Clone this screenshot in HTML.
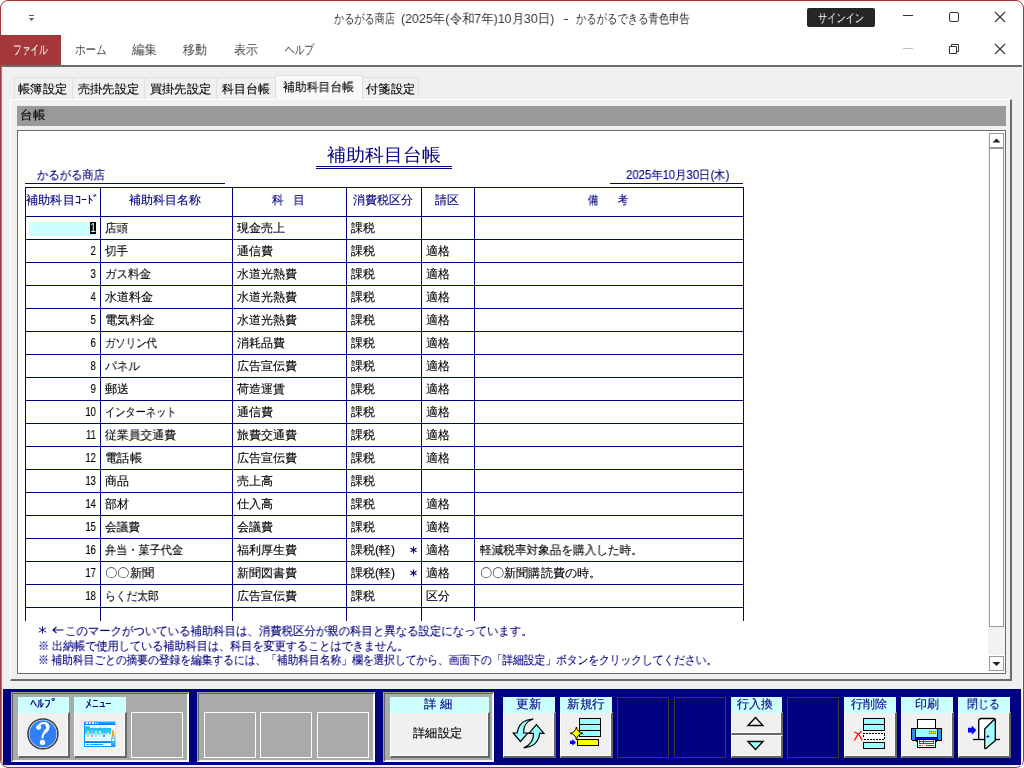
<!DOCTYPE html>
<html lang="ja">
<head>
<meta charset="utf-8">
<style>
*{box-sizing:border-box;margin:0;padding:0}
html,body{width:1024px;height:768px;overflow:hidden;background:#fff}
body{position:relative;font-family:"Liberation Sans",sans-serif;color:#000}
.a{position:absolute;white-space:nowrap;transform-origin:0 0;will-change:transform}
div.a{}
svg.a{overflow:visible}
</style>
</head>
<body>
<div class="a" style="left:0;top:0;width:1024px;height:768px;border:1px solid #a4373a;border-radius:8px;background:#fff"></div>
<svg class="a" style="left:27px;top:13px" width="10" height="10"><path d="M2 2.5h5" stroke="#555" stroke-width="1"/><path d="M2 5h5l-2.5 3z" fill="#555"/></svg>
<div class="a" id="t1" style="left:334px;top:11px;font-size:13px;line-height:15px;color:#333;transform:scaleX(0.7821);">かるがる商店</div>
<div class="a" id="t2" style="left:401px;top:11px;font-size:13px;line-height:15px;color:#333;transform:scaleX(0.9563);">(2025年(令和7年)10月30日)</div>
<div class="a" style="left:564px;top:19px;width:4px;height:1px;background:#444"></div>
<div class="a" id="t3" style="left:576px;top:11px;font-size:13px;line-height:15px;color:#333;transform:scaleX(0.7958);">かるがるできる青色申告</div>
<div class="a" style="left:807px;top:8px;width:68px;height:19px;background:#262626;border-radius:2px"></div>
<div class="a" id="t4" style="left:818px;top:11px;font-size:12px;line-height:14px;color:#fff;transform:scaleX(0.7667);">サインイン</div>
<div class="a" style="left:903px;top:15px;width:10px;height:1px;background:#333"></div>
<div class="a" style="left:949px;top:12px;width:10px;height:10px;border:1px solid #333;border-radius:2px"></div>
<svg class="a" style="left:994px;top:11px" width="12" height="12"><path d="M1 1L11 11M11 1L1 11" stroke="#333" stroke-width="1.1"/></svg>
<div class="a" style="left:1px;top:35px;width:60px;height:30px;background:#a4373a"></div>
<div class="a" id="t5" style="left:13px;top:42px;font-size:13px;line-height:15px;color:#fff;transform:scaleX(0.6667);">ファイル</div>
<div class="a" id="t6" style="left:75px;top:42px;font-size:13px;line-height:15px;color:#444;transform:scaleX(0.8108);">ホーム</div>
<div class="a" id="t7" style="left:132px;top:42px;font-size:13px;line-height:15px;color:#444;transform:scaleX(0.9600);">編集</div>
<div class="a" id="t8" style="left:183px;top:42px;font-size:13px;line-height:15px;color:#444;transform:scaleX(0.9200);">移動</div>
<div class="a" id="t9" style="left:234px;top:42px;font-size:13px;line-height:15px;color:#444;transform:scaleX(0.9231);">表示</div>
<div class="a" id="t10" style="left:285px;top:42px;font-size:13px;line-height:15px;color:#444;transform:scaleX(0.7436);">ヘルプ</div>
<div class="a" style="left:903px;top:48px;width:10px;height:1px;background:#c0c0c0"></div>
<svg class="a" style="left:948px;top:43px" width="12" height="12"><path d="M1.5 3.5h7v7h-7z M3.5 3.5v-2h7v7h-2" fill="none" stroke="#333" stroke-width="1"/></svg>
<svg class="a" style="left:994px;top:43px" width="12" height="12"><path d="M1 1L11 11M11 1L1 11" stroke="#333" stroke-width="1.1"/></svg>
<div class="a" style="left:1px;top:65px;width:1021px;height:701px;background:#f0f0f0;border-top:2px solid #6b6b6b;border-left:1px solid #8a8a8a;border-bottom-left-radius:7px"></div>
<div class="a" style="left:14px;top:77px;width:59px;height:22px;background:#f0f0f0;border:1px solid #e0e0e0;border-bottom:none"></div>
<div class="a" style="left:72px;top:77px;width:73px;height:22px;background:#f0f0f0;border:1px solid #e0e0e0;border-bottom:none"></div>
<div class="a" style="left:144px;top:77px;width:73px;height:22px;background:#f0f0f0;border:1px solid #e0e0e0;border-bottom:none"></div>
<div class="a" style="left:216px;top:77px;width:60px;height:22px;background:#f0f0f0;border:1px solid #e0e0e0;border-bottom:none"></div>
<div class="a" style="left:275px;top:75px;width:88px;height:25px;background:#f9f9f9;border:1px solid #e0e0e0;border-bottom:none"></div>
<div class="a" style="left:362px;top:77px;width:57px;height:22px;background:#f0f0f0;border:1px solid #e0e0e0;border-bottom:none"></div>
<div class="a" style="left:10px;top:99px;width:1002px;height:582px;border-left:1px solid #fff;border-top:1px solid #fff;border-right:2px solid #6b6b6b;border-bottom:2px solid #6b6b6b;background:#f0f0f0"></div>
<div class="a" style="left:276px;top:99px;width:86px;height:1px;background:#f9f9f9"></div>
<div class="a" id="t11" style="left:18px;top:82px;font-size:12px;line-height:14px;color:#000;-webkit-text-stroke:0.12px currentColor;transform:scaleX(1.0213);">帳簿設定</div>
<div class="a" id="t12" style="left:78px;top:82px;font-size:12px;line-height:14px;color:#000;-webkit-text-stroke:0.12px currentColor;transform:scaleX(1.0169);">売掛先設定</div>
<div class="a" id="t13" style="left:150px;top:82px;font-size:12px;line-height:14px;color:#000;-webkit-text-stroke:0.12px currentColor;transform:scaleX(1.0169);">買掛先設定</div>
<div class="a" id="t14" style="left:222px;top:82px;font-size:12px;line-height:14px;color:#000;-webkit-text-stroke:0.12px currentColor;transform:scaleX(1.0000);">科目台帳</div>
<div class="a" id="t15" style="left:283px;top:80px;font-size:12px;line-height:14px;color:#000;-webkit-text-stroke:0.12px currentColor;transform:scaleX(0.9861);">補助科目台帳</div>
<div class="a" id="t16" style="left:366px;top:82px;font-size:12px;line-height:14px;color:#000;-webkit-text-stroke:0.12px currentColor;transform:scaleX(1.0213);">付箋設定</div>
<div class="a" style="left:17px;top:106px;width:989px;height:20px;background:#999"></div>
<div class="a" id="t17" style="left:20px;top:108px;font-size:12px;line-height:14px;color:#000;-webkit-text-stroke:0.12px currentColor;transform:scaleX(1.0435);">台帳</div>
<div class="a" style="left:17px;top:130px;width:989px;height:544px;background:#fff;border-top:1px solid #6b6b6b;border-left:1px solid #6b6b6b;border-right:1px solid #6b6b6b;border-bottom:1px solid #6b6b6b"></div>
<div class="a" style="left:988px;top:133px;width:17px;height:522px;background:#f2f2f2"></div>
<div class="a" style="left:989px;top:133px;width:15px;height:15px;background:#fff;border:1px solid #999"></div>
<div class="a" style="left:989px;top:147px;width:15px;height:480px;background:#fff;border:1px solid #999;border-top:2px solid #999"></div>
<div class="a" style="left:989px;top:656px;width:15px;height:15px;background:#fff;border:1px solid #999"></div>
<svg class="a" style="left:989px;top:133px" width="15" height="15"><path d="M3.5 9.5L7.5 5.5L11.5 9.5z" fill="#222"/></svg>
<svg class="a" style="left:989px;top:656px" width="15" height="15"><path d="M3.5 6L7.5 10L11.5 6z" fill="#222"/></svg>
<div class="a" id="t18" style="left:327px;top:145px;font-size:18px;line-height:20px;color:#000080;transform:scaleX(1.0561);">補助科目台帳</div>
<div class="a" style="left:316px;top:166px;width:136px;height:1px;background:#000080"></div>
<div class="a" style="left:316px;top:168px;width:136px;height:1px;background:#000080"></div>
<div class="a" id="t19" style="left:37px;top:168px;font-size:12px;line-height:14px;color:#000080;-webkit-text-stroke:0.12px currentColor;transform:scaleX(0.9444);">かるがる商店</div>
<div class="a" style="left:25px;top:183px;width:200px;height:1px;background:#000080"></div>
<div class="a" id="t20" style="left:626px;top:168px;font-size:12px;line-height:14px;color:#000080;-webkit-text-stroke:0.12px currentColor;transform:scaleX(0.9450);">2025年10月30日(木)</div>
<div class="a" style="left:610px;top:183px;width:133px;height:1px;background:#000080"></div>
<div class="a" style="left:0;top:0;width:1024px;height:621px;overflow:hidden">
<div class="a" style="left:25px;top:187px;width:719px;height:1px;background:#000080"></div>
<div class="a" style="left:25px;top:216px;width:719px;height:1px;background:#000080"></div>
<div class="a" style="left:25px;top:239px;width:719px;height:1px;background:#000080"></div>
<div class="a" style="left:25px;top:262px;width:719px;height:1px;background:#000080"></div>
<div class="a" style="left:25px;top:285px;width:719px;height:1px;background:#000080"></div>
<div class="a" style="left:25px;top:308px;width:719px;height:1px;background:#000080"></div>
<div class="a" style="left:25px;top:331px;width:719px;height:1px;background:#000080"></div>
<div class="a" style="left:25px;top:354px;width:719px;height:1px;background:#000080"></div>
<div class="a" style="left:25px;top:377px;width:719px;height:1px;background:#000080"></div>
<div class="a" style="left:25px;top:400px;width:719px;height:1px;background:#000080"></div>
<div class="a" style="left:25px;top:423px;width:719px;height:1px;background:#000080"></div>
<div class="a" style="left:25px;top:446px;width:719px;height:1px;background:#000080"></div>
<div class="a" style="left:25px;top:469px;width:719px;height:1px;background:#000080"></div>
<div class="a" style="left:25px;top:492px;width:719px;height:1px;background:#000080"></div>
<div class="a" style="left:25px;top:515px;width:719px;height:1px;background:#000080"></div>
<div class="a" style="left:25px;top:538px;width:719px;height:1px;background:#000080"></div>
<div class="a" style="left:25px;top:561px;width:719px;height:1px;background:#000080"></div>
<div class="a" style="left:25px;top:584px;width:719px;height:1px;background:#000080"></div>
<div class="a" style="left:25px;top:607px;width:719px;height:1px;background:#000080"></div>
<div class="a" style="left:25px;top:187px;width:1px;height:440px;background:#000080"></div>
<div class="a" style="left:100px;top:187px;width:1px;height:440px;background:#000080"></div>
<div class="a" style="left:232px;top:187px;width:1px;height:440px;background:#000080"></div>
<div class="a" style="left:346px;top:187px;width:1px;height:440px;background:#000080"></div>
<div class="a" style="left:421px;top:187px;width:1px;height:440px;background:#000080"></div>
<div class="a" style="left:474px;top:187px;width:1px;height:440px;background:#000080"></div>
<div class="a" style="left:743px;top:187px;width:1px;height:440px;background:#000080"></div>
</div>
<div class="a" id="t21" style="left:26px;top:193px;font-size:12px;line-height:14px;color:#000080;-webkit-text-stroke:0.12px currentColor;transform:scaleX(1.0143);">補助科目ｺｰﾄﾞ</div>
<div class="a" id="t22" style="left:129px;top:193px;font-size:12px;line-height:14px;color:#000080;-webkit-text-stroke:0.12px currentColor;transform:scaleX(1.0000);">補助科目名称</div>
<div class="a" id="t23" style="left:272px;top:193px;font-size:12px;line-height:14px;color:#000080;-webkit-text-stroke:0.12px currentColor;transform:scaleX(0.9688);">科&nbsp;&nbsp;&nbsp;目</div>
<div class="a" id="t24" style="left:353px;top:193px;font-size:12px;line-height:14px;color:#000080;-webkit-text-stroke:0.12px currentColor;transform:scaleX(1.0000);">消費税区分</div>
<div class="a" id="t25" style="left:435px;top:193px;font-size:12px;line-height:14px;color:#000080;-webkit-text-stroke:0.12px currentColor;transform:scaleX(1.0000);">請区</div>
<div class="a" id="t26" style="left:588px;top:193px;font-size:12px;line-height:14px;color:#000080;-webkit-text-stroke:0.12px currentColor;transform:scaleX(0.8511);">備&nbsp;&nbsp;&nbsp;&nbsp;&nbsp;&nbsp;&nbsp;考</div>
<div class="a" style="left:29px;top:222px;width:67px;height:14px;background:#ccffff"></div>
<div class="a" style="left:90px;top:222px;width:6px;height:12px;background:#000"></div>
<div class="a" style="left:89px;top:221px;width:8px;font-size:12px;line-height:14px;color:#fff;text-align:center;transform-origin:50% 0;transform:scaleX(0.8)">1</div>
<div class="a" id="t27" style="left:105px;top:221px;font-size:12px;line-height:14px;color:#000;-webkit-text-stroke:0.12px currentColor;transform:scaleX(0.9583);">店頭</div>
<div class="a" style="left:237px;top:221px;font-size:12px;line-height:14px;color:#000;-webkit-text-stroke:0.12px currentColor;">現金売上</div>
<div class="a" style="left:351px;top:221px;font-size:12px;line-height:14px;color:#000;-webkit-text-stroke:0.12px currentColor;">課税</div>
<div class="a" style="left:40px;top:244px;width:56px;font-size:12px;line-height:14px;color:#000;text-align:right;transform-origin:100% 0;transform:scaleX(0.8);-webkit-text-stroke:0.12px currentColor">2</div>
<div class="a" id="t30" style="left:105px;top:244px;font-size:12px;line-height:14px;color:#000;-webkit-text-stroke:0.12px currentColor;transform:scaleX(0.9583);">切手</div>
<div class="a" style="left:237px;top:244px;font-size:12px;line-height:14px;color:#000;-webkit-text-stroke:0.12px currentColor;">通信費</div>
<div class="a" style="left:351px;top:244px;font-size:12px;line-height:14px;color:#000;-webkit-text-stroke:0.12px currentColor;">課税</div>
<div class="a" style="left:426px;top:244px;font-size:12px;line-height:14px;color:#000;-webkit-text-stroke:0.12px currentColor;">適格</div>
<div class="a" style="left:40px;top:267px;width:56px;font-size:12px;line-height:14px;color:#000;text-align:right;transform-origin:100% 0;transform:scaleX(0.8);-webkit-text-stroke:0.12px currentColor">3</div>
<div class="a" id="t34" style="left:105px;top:267px;font-size:12px;line-height:14px;color:#000;-webkit-text-stroke:0.12px currentColor;transform:scaleX(0.9574);">ガス料金</div>
<div class="a" style="left:237px;top:267px;font-size:12px;line-height:14px;color:#000;-webkit-text-stroke:0.12px currentColor;">水道光熱費</div>
<div class="a" style="left:351px;top:267px;font-size:12px;line-height:14px;color:#000;-webkit-text-stroke:0.12px currentColor;">課税</div>
<div class="a" style="left:426px;top:267px;font-size:12px;line-height:14px;color:#000;-webkit-text-stroke:0.12px currentColor;">適格</div>
<div class="a" style="left:40px;top:290px;width:56px;font-size:12px;line-height:14px;color:#000;text-align:right;transform-origin:100% 0;transform:scaleX(0.8);-webkit-text-stroke:0.12px currentColor">4</div>
<div class="a" id="t38" style="left:105px;top:290px;font-size:12px;line-height:14px;color:#000;-webkit-text-stroke:0.12px currentColor;transform:scaleX(1.0000);">水道料金</div>
<div class="a" style="left:237px;top:290px;font-size:12px;line-height:14px;color:#000;-webkit-text-stroke:0.12px currentColor;">水道光熱費</div>
<div class="a" style="left:351px;top:290px;font-size:12px;line-height:14px;color:#000;-webkit-text-stroke:0.12px currentColor;">課税</div>
<div class="a" style="left:426px;top:290px;font-size:12px;line-height:14px;color:#000;-webkit-text-stroke:0.12px currentColor;">適格</div>
<div class="a" style="left:40px;top:313px;width:56px;font-size:12px;line-height:14px;color:#000;text-align:right;transform-origin:100% 0;transform:scaleX(0.8);-webkit-text-stroke:0.12px currentColor">5</div>
<div class="a" id="t42" style="left:105px;top:313px;font-size:12px;line-height:14px;color:#000;-webkit-text-stroke:0.12px currentColor;transform:scaleX(1.0213);">電気料金</div>
<div class="a" style="left:237px;top:313px;font-size:12px;line-height:14px;color:#000;-webkit-text-stroke:0.12px currentColor;">水道光熱費</div>
<div class="a" style="left:351px;top:313px;font-size:12px;line-height:14px;color:#000;-webkit-text-stroke:0.12px currentColor;">課税</div>
<div class="a" style="left:426px;top:313px;font-size:12px;line-height:14px;color:#000;-webkit-text-stroke:0.12px currentColor;">適格</div>
<div class="a" style="left:40px;top:336px;width:56px;font-size:12px;line-height:14px;color:#000;text-align:right;transform-origin:100% 0;transform:scaleX(0.8);-webkit-text-stroke:0.12px currentColor">6</div>
<div class="a" id="t46" style="left:105px;top:336px;font-size:12px;line-height:14px;color:#000;-webkit-text-stroke:0.12px currentColor;transform:scaleX(0.8644);">ガソリン代</div>
<div class="a" style="left:237px;top:336px;font-size:12px;line-height:14px;color:#000;-webkit-text-stroke:0.12px currentColor;">消耗品費</div>
<div class="a" style="left:351px;top:336px;font-size:12px;line-height:14px;color:#000;-webkit-text-stroke:0.12px currentColor;">課税</div>
<div class="a" style="left:426px;top:336px;font-size:12px;line-height:14px;color:#000;-webkit-text-stroke:0.12px currentColor;">適格</div>
<div class="a" style="left:40px;top:359px;width:56px;font-size:12px;line-height:14px;color:#000;text-align:right;transform-origin:100% 0;transform:scaleX(0.8);-webkit-text-stroke:0.12px currentColor">8</div>
<div class="a" id="t50" style="left:105px;top:359px;font-size:12px;line-height:14px;color:#000;-webkit-text-stroke:0.12px currentColor;transform:scaleX(0.9722);">パネル</div>
<div class="a" style="left:237px;top:359px;font-size:12px;line-height:14px;color:#000;-webkit-text-stroke:0.12px currentColor;">広告宣伝費</div>
<div class="a" style="left:351px;top:359px;font-size:12px;line-height:14px;color:#000;-webkit-text-stroke:0.12px currentColor;">課税</div>
<div class="a" style="left:426px;top:359px;font-size:12px;line-height:14px;color:#000;-webkit-text-stroke:0.12px currentColor;">適格</div>
<div class="a" style="left:40px;top:382px;width:56px;font-size:12px;line-height:14px;color:#000;text-align:right;transform-origin:100% 0;transform:scaleX(0.8);-webkit-text-stroke:0.12px currentColor">9</div>
<div class="a" id="t54" style="left:105px;top:382px;font-size:12px;line-height:14px;color:#000;-webkit-text-stroke:0.12px currentColor;transform:scaleX(1.0000);">郵送</div>
<div class="a" style="left:237px;top:382px;font-size:12px;line-height:14px;color:#000;-webkit-text-stroke:0.12px currentColor;">荷造運賃</div>
<div class="a" style="left:351px;top:382px;font-size:12px;line-height:14px;color:#000;-webkit-text-stroke:0.12px currentColor;">課税</div>
<div class="a" style="left:426px;top:382px;font-size:12px;line-height:14px;color:#000;-webkit-text-stroke:0.12px currentColor;">適格</div>
<div class="a" style="left:40px;top:405px;width:56px;font-size:12px;line-height:14px;color:#000;text-align:right;transform-origin:100% 0;transform:scaleX(0.8);-webkit-text-stroke:0.12px currentColor">10</div>
<div class="a" id="t58" style="left:105px;top:405px;font-size:12px;line-height:14px;color:#000;-webkit-text-stroke:0.12px currentColor;transform:scaleX(0.8500);">インターネット</div>
<div class="a" style="left:237px;top:405px;font-size:12px;line-height:14px;color:#000;-webkit-text-stroke:0.12px currentColor;">通信費</div>
<div class="a" style="left:351px;top:405px;font-size:12px;line-height:14px;color:#000;-webkit-text-stroke:0.12px currentColor;">課税</div>
<div class="a" style="left:426px;top:405px;font-size:12px;line-height:14px;color:#000;-webkit-text-stroke:0.12px currentColor;">適格</div>
<div class="a" style="left:40px;top:428px;width:56px;font-size:12px;line-height:14px;color:#000;text-align:right;transform-origin:100% 0;transform:scaleX(0.8);-webkit-text-stroke:0.12px currentColor">11</div>
<div class="a" id="t62" style="left:105px;top:428px;font-size:12px;line-height:14px;color:#000;-webkit-text-stroke:0.12px currentColor;transform:scaleX(0.9861);">従業員交通費</div>
<div class="a" style="left:237px;top:428px;font-size:12px;line-height:14px;color:#000;-webkit-text-stroke:0.12px currentColor;">旅費交通費</div>
<div class="a" style="left:351px;top:428px;font-size:12px;line-height:14px;color:#000;-webkit-text-stroke:0.12px currentColor;">課税</div>
<div class="a" style="left:426px;top:428px;font-size:12px;line-height:14px;color:#000;-webkit-text-stroke:0.12px currentColor;">適格</div>
<div class="a" style="left:40px;top:451px;width:56px;font-size:12px;line-height:14px;color:#000;text-align:right;transform-origin:100% 0;transform:scaleX(0.8);-webkit-text-stroke:0.12px currentColor">12</div>
<div class="a" id="t66" style="left:105px;top:451px;font-size:12px;line-height:14px;color:#000;-webkit-text-stroke:0.12px currentColor;transform:scaleX(1.0286);">電話帳</div>
<div class="a" style="left:237px;top:451px;font-size:12px;line-height:14px;color:#000;-webkit-text-stroke:0.12px currentColor;">広告宣伝費</div>
<div class="a" style="left:351px;top:451px;font-size:12px;line-height:14px;color:#000;-webkit-text-stroke:0.12px currentColor;">課税</div>
<div class="a" style="left:426px;top:451px;font-size:12px;line-height:14px;color:#000;-webkit-text-stroke:0.12px currentColor;">適格</div>
<div class="a" style="left:40px;top:474px;width:56px;font-size:12px;line-height:14px;color:#000;text-align:right;transform-origin:100% 0;transform:scaleX(0.8);-webkit-text-stroke:0.12px currentColor">13</div>
<div class="a" id="t70" style="left:105px;top:474px;font-size:12px;line-height:14px;color:#000;-webkit-text-stroke:0.12px currentColor;transform:scaleX(1.0000);">商品</div>
<div class="a" style="left:237px;top:474px;font-size:12px;line-height:14px;color:#000;-webkit-text-stroke:0.12px currentColor;">売上高</div>
<div class="a" style="left:351px;top:474px;font-size:12px;line-height:14px;color:#000;-webkit-text-stroke:0.12px currentColor;">課税</div>
<div class="a" style="left:40px;top:497px;width:56px;font-size:12px;line-height:14px;color:#000;text-align:right;transform-origin:100% 0;transform:scaleX(0.8);-webkit-text-stroke:0.12px currentColor">14</div>
<div class="a" id="t73" style="left:105px;top:497px;font-size:12px;line-height:14px;color:#000;-webkit-text-stroke:0.12px currentColor;transform:scaleX(1.0000);">部材</div>
<div class="a" style="left:237px;top:497px;font-size:12px;line-height:14px;color:#000;-webkit-text-stroke:0.12px currentColor;">仕入高</div>
<div class="a" style="left:351px;top:497px;font-size:12px;line-height:14px;color:#000;-webkit-text-stroke:0.12px currentColor;">課税</div>
<div class="a" style="left:426px;top:497px;font-size:12px;line-height:14px;color:#000;-webkit-text-stroke:0.12px currentColor;">適格</div>
<div class="a" style="left:40px;top:520px;width:56px;font-size:12px;line-height:14px;color:#000;text-align:right;transform-origin:100% 0;transform:scaleX(0.8);-webkit-text-stroke:0.12px currentColor">15</div>
<div class="a" id="t77" style="left:105px;top:520px;font-size:12px;line-height:14px;color:#000;-webkit-text-stroke:0.12px currentColor;transform:scaleX(0.9722);">会議費</div>
<div class="a" style="left:237px;top:520px;font-size:12px;line-height:14px;color:#000;-webkit-text-stroke:0.12px currentColor;">会議費</div>
<div class="a" style="left:351px;top:520px;font-size:12px;line-height:14px;color:#000;-webkit-text-stroke:0.12px currentColor;">課税</div>
<div class="a" style="left:426px;top:520px;font-size:12px;line-height:14px;color:#000;-webkit-text-stroke:0.12px currentColor;">適格</div>
<div class="a" style="left:40px;top:543px;width:56px;font-size:12px;line-height:14px;color:#000;text-align:right;transform-origin:100% 0;transform:scaleX(0.8);-webkit-text-stroke:0.12px currentColor">16</div>
<div class="a" id="t81" style="left:105px;top:543px;font-size:12px;line-height:14px;color:#000;-webkit-text-stroke:0.12px currentColor;transform:scaleX(0.9286);">弁当・菓子代金</div>
<div class="a" style="left:237px;top:543px;font-size:12px;line-height:14px;color:#000;-webkit-text-stroke:0.12px currentColor;">福利厚生費</div>
<div class="a" style="left:351px;top:543px;font-size:12px;line-height:14px;color:#000;-webkit-text-stroke:0.12px currentColor;">課税(軽)</div>
<svg class="a" style="left:410px;top:546px" width="8" height="8"><path d="M3.5 0.5v7M0.5 2.2l6 3.6M0.5 5.8l6-3.6" stroke="#000080" stroke-width="1.1"/></svg>
<div class="a" style="left:426px;top:543px;font-size:12px;line-height:14px;color:#000;-webkit-text-stroke:0.12px currentColor;">適格</div>
<div class="a" id="t85" style="left:480px;top:543px;font-size:12px;line-height:14px;color:#000;-webkit-text-stroke:0.12px currentColor;transform:scaleX(0.9688);">軽減税率対象品を購入した時。</div>
<div class="a" style="left:40px;top:566px;width:56px;font-size:12px;line-height:14px;color:#000;text-align:right;transform-origin:100% 0;transform:scaleX(0.8);-webkit-text-stroke:0.12px currentColor">17</div>
<div class="a" id="t86" style="left:105px;top:566px;font-size:12px;line-height:14px;color:#000;-webkit-text-stroke:0.12px currentColor;transform:scaleX(1.0213);">〇〇新聞</div>
<div class="a" style="left:237px;top:566px;font-size:12px;line-height:14px;color:#000;-webkit-text-stroke:0.12px currentColor;">新聞図書費</div>
<div class="a" style="left:351px;top:566px;font-size:12px;line-height:14px;color:#000;-webkit-text-stroke:0.12px currentColor;">課税(軽)</div>
<svg class="a" style="left:410px;top:569px" width="8" height="8"><path d="M3.5 0.5v7M0.5 2.2l6 3.6M0.5 5.8l6-3.6" stroke="#000080" stroke-width="1.1"/></svg>
<div class="a" style="left:426px;top:566px;font-size:12px;line-height:14px;color:#000;-webkit-text-stroke:0.12px currentColor;">適格</div>
<div class="a" id="t90" style="left:480px;top:566px;font-size:12px;line-height:14px;color:#000;-webkit-text-stroke:0.12px currentColor;transform:scaleX(1.0090);">〇〇新聞購読費の時。</div>
<div class="a" style="left:40px;top:589px;width:56px;font-size:12px;line-height:14px;color:#000;text-align:right;transform-origin:100% 0;transform:scaleX(0.8);-webkit-text-stroke:0.12px currentColor">18</div>
<div class="a" id="t91" style="left:105px;top:589px;font-size:12px;line-height:14px;color:#000;-webkit-text-stroke:0.12px currentColor;transform:scaleX(0.8966);">らくだ太郎</div>
<div class="a" style="left:237px;top:589px;font-size:12px;line-height:14px;color:#000;-webkit-text-stroke:0.12px currentColor;">広告宣伝費</div>
<div class="a" style="left:351px;top:589px;font-size:12px;line-height:14px;color:#000;-webkit-text-stroke:0.12px currentColor;">課税</div>
<div class="a" style="left:426px;top:589px;font-size:12px;line-height:14px;color:#000;-webkit-text-stroke:0.12px currentColor;">区分</div>
<svg class="a" style="left:38px;top:626px" width="9" height="8"><path d="M4.5 0.3v7.4M0.8 1.8l7.4 4.4M0.8 6.2l7.4-4.4" stroke="#000080" stroke-width="0.9"/></svg>
<svg class="a" style="left:52px;top:626px" width="12" height="8"><path d="M1 4H11.5M4.5 0.8L1 4L4.5 7.2" fill="none" stroke="#000080" stroke-width="1.1"/></svg>
<div class="a" id="t95" style="left:65px;top:624px;font-size:12px;line-height:14px;color:#000080;-webkit-text-stroke:0.12px currentColor;transform:scaleX(0.9503);">このマークがついている補助科目は、消費税区分が親の科目と異なる設定になっています。</div>
<div class="a" id="t96" style="left:38px;top:639px;font-size:12px;line-height:14px;color:#000080;-webkit-text-stroke:0.12px currentColor;transform:scaleX(0.9282);">※ 出納帳で使用している補助科目は、科目を変更することはできません。</div>
<div class="a" id="t97" style="left:38px;top:653px;font-size:12px;line-height:14px;color:#000080;-webkit-text-stroke:0.12px currentColor;transform:scaleX(0.8947);">※ 補助科目ごとの摘要の登録を編集するには、「補助科目名称」欄を選択してから、画面下の「詳細設定」ボタンをクリックしてください。</div>
<div class="a" style="left:3px;top:689px;width:1018px;height:76px;background:#000080"></div>
<div class="a" style="left:11px;top:692px;width:178px;height:70px;background:#aaaaaa;border-top:1px solid #a0a0a0;border-left:1px solid #a0a0a0;border-right:1px solid #fff;border-bottom:1px solid #fff;box-shadow:inset 1px 1px 0 #606060,inset -1px -1px 0 #f4f4f4"></div>
<div class="a" style="left:197px;top:692px;width:178px;height:70px;background:#aaaaaa;border-top:1px solid #a0a0a0;border-left:1px solid #a0a0a0;border-right:1px solid #fff;border-bottom:1px solid #fff;box-shadow:inset 1px 1px 0 #606060,inset -1px -1px 0 #f4f4f4"></div>
<div class="a" style="left:383px;top:692px;width:111px;height:70px;background:#aaaaaa;border-top:1px solid #a0a0a0;border-left:1px solid #a0a0a0;border-right:1px solid #fff;border-bottom:1px solid #fff;box-shadow:inset 1px 1px 0 #606060,inset -1px -1px 0 #f4f4f4"></div>
<div class="a" style="left:131px;top:712px;width:52px;height:46px;border:1px solid #fff"></div>
<div class="a" style="left:204px;top:712px;width:52px;height:46px;border:1px solid #fff"></div>
<div class="a" style="left:260px;top:712px;width:52px;height:46px;border:1px solid #fff"></div>
<div class="a" style="left:317px;top:712px;width:52px;height:46px;border:1px solid #fff"></div>
<div class="a" style="left:617px;top:697px;width:52px;height:61px;border:1px solid #3a3a3a"></div>
<div class="a" style="left:674px;top:697px;width:52px;height:61px;border:1px solid #3a3a3a"></div>
<div class="a" style="left:787px;top:697px;width:52px;height:61px;border:1px solid #3a3a3a"></div>
<div class="a" style="left:18px;top:712px;width:52px;height:46px;background:#f0f0f0;border-left:1px solid #fff;border-right:2px solid #666;border-bottom:2px solid #666;box-shadow:inset -1px -1px 0 #fafafa"></div>
<div class="a" style="left:18px;top:697px;width:51px;height:16px;background:#ccffff"></div>
<div class="a" id="t98" style="left:30px;top:697px;font-size:12px;line-height:14px;color:#000080;-webkit-text-stroke:0.12px currentColor;transform:scaleX(1.1818);">ﾍﾙﾌﾟ</div>
<div class="a" style="left:74px;top:712px;width:53px;height:46px;background:#f0f0f0;border-left:1px solid #fff;border-right:2px solid #666;border-bottom:2px solid #666;box-shadow:inset -1px -1px 0 #fafafa"></div>
<div class="a" style="left:74px;top:697px;width:52px;height:16px;background:#ccffff"></div>
<div class="a" id="t99" style="left:85px;top:697px;font-size:12px;line-height:14px;color:#000080;-webkit-text-stroke:0.12px currentColor;transform:scaleX(1.1250);">ﾒﾆｭｰ</div>
<div class="a" style="left:390px;top:712px;width:100px;height:46px;background:#f0f0f0;border-left:1px solid #fff;border-right:2px solid #666;border-bottom:2px solid #666;box-shadow:inset -1px -1px 0 #fafafa"></div>
<div class="a" style="left:390px;top:697px;width:99px;height:16px;background:#ccffff"></div>
<div class="a" id="t100" style="left:424px;top:697px;font-size:12px;line-height:14px;color:#000080;-webkit-text-stroke:0.12px currentColor;transform:scaleX(1.0385);">詳&nbsp;細</div>
<div class="a" id="t101" style="left:413px;top:726px;font-size:12px;line-height:14px;color:#000;-webkit-text-stroke:0.12px currentColor;transform:scaleX(1.0213);">詳細設定</div>
<div class="a" style="left:503px;top:712px;width:53px;height:46px;background:#f0f0f0;border-left:1px solid #fff;border-right:2px solid #666;border-bottom:2px solid #666;box-shadow:inset -1px -1px 0 #fafafa"></div>
<div class="a" style="left:503px;top:697px;width:52px;height:16px;background:#ccffff"></div>
<div class="a" id="t102" style="left:516px;top:697px;font-size:12px;line-height:14px;color:#000080;-webkit-text-stroke:0.12px currentColor;transform:scaleX(1.0417);">更新</div>
<div class="a" style="left:560px;top:712px;width:53px;height:46px;background:#f0f0f0;border-left:1px solid #fff;border-right:2px solid #666;border-bottom:2px solid #666;box-shadow:inset -1px -1px 0 #fafafa"></div>
<div class="a" style="left:560px;top:697px;width:52px;height:16px;background:#ccffff"></div>
<div class="a" id="t103" style="left:567px;top:697px;font-size:12px;line-height:14px;color:#000080;-webkit-text-stroke:0.12px currentColor;transform:scaleX(1.0556);">新規行</div>
<div class="a" style="left:731px;top:712px;width:52px;height:23px;background:#f0f0f0;border-left:1px solid #fff;border-right:2px solid #666;border-bottom:2px solid #666;box-shadow:inset -1px -1px 0 #fafafa"></div>
<div class="a" style="left:731px;top:735px;width:52px;height:23px;background:#f0f0f0;border-left:1px solid #fff;border-top:1px solid #fff;border-right:2px solid #666;border-bottom:2px solid #666;box-shadow:inset -1px -1px 0 #fafafa"></div>
<div class="a" style="left:731px;top:697px;width:51px;height:16px;background:#ccffff"></div>
<div class="a" id="t104" style="left:737px;top:697px;font-size:12px;line-height:14px;color:#000080;-webkit-text-stroke:0.12px currentColor;transform:scaleX(1.0000);">行入換</div>
<svg class="a" style="left:746px;top:716px" width="19" height="11"><path d="M2 9.5L9.5 1.5L17 9.5z" fill="#f0f0f0" stroke="#000" stroke-width="1.3"/></svg>
<svg class="a" style="left:746px;top:740px" width="19" height="11"><path d="M2 1.5L9.5 9.5L17 1.5z" fill="#99ffff" stroke="#000" stroke-width="1.3"/></svg>
<div class="a" style="left:844px;top:712px;width:53px;height:46px;background:#f0f0f0;border-left:1px solid #fff;border-right:2px solid #666;border-bottom:2px solid #666;box-shadow:inset -1px -1px 0 #fafafa"></div>
<div class="a" style="left:844px;top:697px;width:52px;height:16px;background:#ccffff"></div>
<div class="a" id="t105" style="left:851px;top:697px;font-size:12px;line-height:14px;color:#000080;-webkit-text-stroke:0.12px currentColor;transform:scaleX(1.0000);">行削除</div>
<div class="a" style="left:901px;top:712px;width:53px;height:46px;background:#f0f0f0;border-left:1px solid #fff;border-right:2px solid #666;border-bottom:2px solid #666;box-shadow:inset -1px -1px 0 #fafafa"></div>
<div class="a" style="left:901px;top:697px;width:52px;height:16px;background:#ccffff"></div>
<div class="a" id="t106" style="left:915px;top:697px;font-size:12px;line-height:14px;color:#000080;-webkit-text-stroke:0.12px currentColor;transform:scaleX(1.0000);">印刷</div>
<div class="a" style="left:958px;top:712px;width:53px;height:46px;background:#f0f0f0;border-left:1px solid #fff;border-right:2px solid #666;border-bottom:2px solid #666;box-shadow:inset -1px -1px 0 #fafafa"></div>
<div class="a" style="left:958px;top:697px;width:52px;height:16px;background:#ccffff"></div>
<div class="a" id="t107" style="left:967px;top:697px;font-size:12px;line-height:14px;color:#000080;-webkit-text-stroke:0.12px currentColor;transform:scaleX(0.9143);">閉じる</div>
<svg class="a" style="left:26px;top:717px" width="34" height="34"><circle cx="16.95" cy="16.9" r="14.95" fill="#fff" stroke="#3a3a3a" stroke-width="1.5"/><circle cx="16.95" cy="16.9" r="13.6" fill="#2f80f8"/><path d="M13.2 8.6 C14 6.6 15.8 5.9 17.6 5.9 C20.6 5.9 22.6 7.6 22.6 10.2 C22.6 13 20.2 14.2 18.4 15.8 C17.1 17 16.5 18.2 16.4 20.6" fill="none" stroke="#fff" stroke-width="2" stroke-linecap="round"/><path d="M19.5 6.6 C21.2 7.6 21.8 8.8 21.8 10.4 C21.8 12.6 20 13.8 18.6 15.2" fill="none" stroke="#fff" stroke-width="3"/><circle cx="12.6" cy="10.2" r="2.5" fill="#fff"/><circle cx="16.5" cy="25.4" r="2.7" fill="#fff"/></svg>
<svg class="a" style="left:84px;top:720px" width="32" height="28">
<defs>
<linearGradient id="gtop" x1="0" y1="0" x2="0" y2="1"><stop offset="0" stop-color="#9af0ff"/><stop offset="0.4" stop-color="#10a8ff"/><stop offset="1" stop-color="#0070f0"/></linearGradient>
<linearGradient id="gmain" x1="0" y1="0" x2="0" y2="1"><stop offset="0" stop-color="#18c0ff"/><stop offset="0.35" stop-color="#30d0ff"/><stop offset="0.6" stop-color="#e8ffff"/><stop offset="0.8" stop-color="#ffffff"/><stop offset="1" stop-color="#ffffff"/></linearGradient>
<linearGradient id="gright" x1="0" y1="0" x2="0" y2="1"><stop offset="0" stop-color="#ffffff"/><stop offset="0.45" stop-color="#ffffff"/><stop offset="0.6" stop-color="#60d8ff"/><stop offset="1" stop-color="#0a90f0"/></linearGradient>
</defs>
<rect x="0" y="1" width="31.2" height="26" fill="#0a9cf5"/>
<rect x="0" y="1" width="31.2" height="4" fill="url(#gtop)"/>
<rect x="2" y="2.2" width="2" height="1.8" fill="#fff"/><rect x="4.9" y="2.2" width="2" height="1.8" fill="#fff"/><rect x="8" y="2.2" width="2" height="1.8" fill="#fff"/>
<circle cx="11.5" cy="3.4" r="0.6" fill="#fff"/><circle cx="13.5" cy="3.4" r="0.6" fill="#fff"/>
<rect x="1" y="5" width="30" height="3.2" fill="#fff"/>
<rect x="1" y="6.2" width="5" height="2" fill="#20c0ff"/>
<rect x="7.3" y="6.3" width="4.6" height="1.5" fill="#c0f4ff"/><rect x="13.2" y="6.3" width="4.8" height="1.5" fill="#c0f4ff"/><rect x="19.2" y="6.3" width="5" height="1.5" fill="#c0f4ff"/>
<rect x="1" y="8" width="26" height="13" fill="url(#gmain)"/>
<rect x="2.2" y="18" width="24" height="2" fill="#c8fcff"/>
<rect x="27" y="5" width="4.2" height="22" fill="url(#gright)"/>
<rect x="28" y="10" width="1.6" height="6.8" fill="#ff9000"/><rect x="29.4" y="13" width="0.9" height="3.8" fill="#ff9000"/>
<rect x="28" y="19" width="2" height="2" fill="#fff"/>
<g><rect x="3" y="11" width="2" height="2" fill="#ffd030"/><rect x="7" y="11" width="2" height="2" fill="#c8a8ff"/><rect x="11" y="11" width="2" height="2" fill="#a8ff90"/><rect x="15" y="11" width="2" height="2" fill="#ffd0f0"/><rect x="19" y="11" width="2" height="2" fill="#7090ff"/>
<rect x="3" y="15" width="2" height="2" fill="#ffc020"/><rect x="7" y="15" width="2" height="2" fill="#a8a8ff"/><rect x="11" y="15" width="2" height="2" fill="#90ff90"/><rect x="15" y="15" width="2" height="2" fill="#ffd0f0"/><rect x="19" y="15" width="2" height="2" fill="#5080ff"/>
<rect x="23" y="13" width="2" height="2" fill="#ffff90"/></g>
<rect x="1" y="21.7" width="26" height="1.3" fill="#0080ff"/>
<rect x="1" y="23" width="26" height="3" fill="#fff"/>
<rect x="2.2" y="24" width="3" height="1" fill="#10a0ff"/><rect x="6.2" y="24" width="13" height="1" fill="#10a0ff"/>
</svg>
<svg class="a" style="left:512px;top:718px" width="34" height="32">
<path d="M21.2 1 C14 1.5 6.5 5 5.2 15 L1.2 15 L8.4 23.5 L15.8 15 L11.6 15 C11.2 8 14 3.5 21.2 1 Z" fill="#99ffff" stroke="#000" stroke-width="1.2" stroke-linejoin="miter"/>
<path d="M11.8 29.8 C19 29.2 26.5 25.5 27.7 15.3 L31.9 15.3 L24.4 6.6 L17 15.3 L21.5 15.3 C21.8 22.5 18 27.2 11.8 29.8 Z" fill="#99ffff" stroke="#000" stroke-width="1.2" stroke-linejoin="miter"/>
</svg>
<svg class="a" style="left:566px;top:714px" width="42" height="38">
<g shape-rendering="crispEdges">
<rect x="13" y="4" width="22" height="19" fill="#000"/>
<rect x="14" y="5" width="20" height="5" fill="#99ffff"/><rect x="14" y="11" width="20" height="5" fill="#99ffff"/><rect x="14" y="17" width="20" height="5" fill="#99ffff"/>
<rect x="11" y="25" width="22" height="7" fill="#000"/>
<rect x="12" y="26" width="20" height="5" fill="#ffff00"/>
</g>
<path d="M10.4 13 Q11.3 18.3 16.8 19.3 Q11.3 20.3 10.4 25.6 Q9.5 20.3 4.2 19.3 Q9.5 18.3 10.4 13z" fill="#ffff00" stroke="#000" stroke-width="1"/>
<path d="M4 26.8h2.4v-1.8l3.6 3.4l-3.6 3.4v-1.8h-2.4z" fill="#0000ff"/>
</svg>
<svg class="a" style="left:850px;top:714px" width="42" height="38">
<g shape-rendering="crispEdges">
<rect x="13" y="4" width="22" height="13" fill="#000"/>
<rect x="14" y="5" width="20" height="5" fill="#99ffff"/><rect x="14" y="11" width="20" height="5" fill="#99ffff"/>
<rect x="13" y="28" width="22" height="7" fill="#000"/>
<rect x="14" y="29" width="20" height="5" fill="#99ffff"/>
<rect x="14" y="20" width="20" height="5" fill="#fff"/>
<g fill="#000"><rect x="13" y="19" width="2" height="1"/><rect x="16" y="19" width="2" height="1"/><rect x="19" y="19" width="2" height="1"/><rect x="22" y="19" width="2" height="1"/><rect x="25" y="19" width="2" height="1"/><rect x="28" y="19" width="2" height="1"/><rect x="31" y="19" width="2" height="1"/><rect x="34" y="19" width="1" height="1"/><rect x="14" y="25" width="2" height="1"/><rect x="17" y="25" width="2" height="1"/><rect x="20" y="25" width="2" height="1"/><rect x="23" y="25" width="2" height="1"/><rect x="26" y="25" width="2" height="1"/><rect x="29" y="25" width="2" height="1"/><rect x="32" y="25" width="2" height="1"/><rect x="13" y="21" width="1" height="2"/><rect x="34" y="20" width="1" height="2"/><rect x="34" y="23" width="1" height="2"/></g>
</g>
<path d="M4 18 Q9 18.5 12 26.5 M4.3 26.5 Q7 21 11.5 17" fill="none" stroke="#ff0000" stroke-width="1.2"/>
</svg>
<svg class="a" style="left:906px;top:714px" width="42" height="38" shape-rendering="crispEdges">
<rect x="11" y="5" width="19" height="10" fill="#000"/>
<rect x="12" y="6" width="17" height="8" fill="#fff"/>
<path d="M5 14H36V26L35 27H31V28H10V27H6L5 26z" fill="#000"/>
<rect x="6" y="15" width="3" height="11" fill="#3a86f2"/>
<rect x="32" y="15" width="3" height="11" fill="#3a86f2"/>
<rect x="10" y="15" width="21" height="8" fill="#99ffff"/>
<rect x="10" y="24" width="21" height="2" fill="#0000ff"/>
<rect x="23" y="17" width="7" height="3" fill="#999"/>
<rect x="24" y="18" width="1" height="1" fill="#ff0"/><rect x="26" y="18" width="1" height="1" fill="#ff0"/><rect x="28" y="18" width="1" height="1" fill="#ff0"/>
<rect x="11" y="25" width="19" height="9" fill="#000"/>
<rect x="12" y="26" width="17" height="7" fill="#fff"/>
<path d="M13 26h1v4h-1zM17 26h1v4h-1zM27 26h1v4h-1zM13 27h15v1h-15zM13 29h15v1h-15zM13 31h2v1h-2zM16 31h1v1h-1zM20 31h8v1h-8z" fill="#ff0000"/>
</svg>
<svg class="a" style="left:966px;top:716px" width="36" height="36">
<path d="M2 11.8h3.8v-2.2l4.6 4.6l-4.6 4.6v-2.2h-3.8z" fill="#0000ff"/>
<path d="M12.7 23.2V5 Q12.7 2.5 15.2 2.5H27.8 Q29.3 2.5 29.3 4V23.2" fill="#fff" stroke="#000" stroke-width="1.3"/>
<path d="M7 23.5H34" stroke="#000" stroke-width="1.3"/>
<path d="M18.7 13 L28 3.8 Q29.3 3 29.3 4.6 V24.6 L20 32.4 Q18.7 33.2 18.7 31.8z" fill="#a8ffff" stroke="#000" stroke-width="1.3" stroke-linejoin="round"/>
<path d="M20.3 20.5h3M21.8 19v3" stroke="#0000ff" stroke-width="0.9"/>
</svg>
</body>
</html>
